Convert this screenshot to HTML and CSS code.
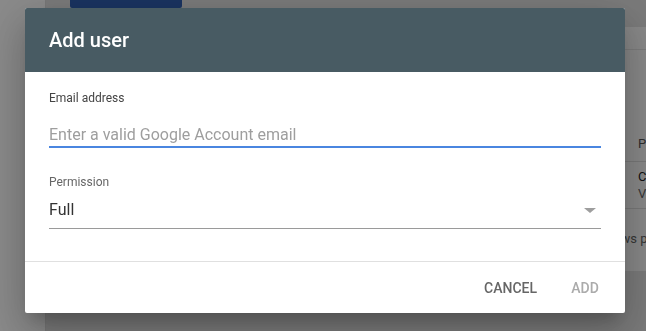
FILE: index.html
```html
<!DOCTYPE html>
<html lang="en">
<head>
    <meta charset="UTF-8">
    <meta name="viewport" content="width=device-width, initial-scale=1.0">
    <title>Add user</title>
    <link rel="stylesheet" href="styles.css">
</head>
<body>
    <div class="page">
        <aside class="sidebar"></aside>
        <main class="content">
            <div class="toolbar">
                <button class="primary-btn" aria-label="Add user"></button>
            </div>
            <div class="card">
                <div class="card-head"></div>
                <div class="card-filter"></div>
                <div class="table-row table-header">
                    <span class="col-name"></span>
                    <span class="col-perm">Permissions</span>
                </div>
                <div class="table-row">
                    <span class="col-name"></span>
                    <span class="col-perm">Collaborate<br><small>View</small></span>
                </div>
                <div class="table-footer">Rows per page: 10</div>
            </div>
        </main>
    </div>

    <div class="overlay">
        <div class="dialog">
            <div class="dialog-header">Add user</div>
            <div class="dialog-body">
                <label class="field-label" for="email">Email address</label>
                <input class="field-input" id="email" type="text" placeholder="Enter a valid Google Account email">

                <div class="field-label permission-label">Permission</div>
                <div class="select">
                    <span class="select-value">Full</span>
                    <span class="select-arrow"></span>
                </div>
            </div>
            <div class="dialog-footer">
                <button class="text-btn cancel-btn">Cancel</button>
                <button class="text-btn add-btn" disabled>Add</button>
            </div>
        </div>
    </div>
</body>
</html>
```

FILE: styles.css
```css
* {
    margin: 0;
    padding: 0;
    box-sizing: border-box;
}

body {
    font-family: Roboto, "Liberation Sans", Arial, sans-serif;
    background-color: #e2e2e2;
    width: 646px;
    height: 331px;
    overflow: hidden;
}

/* page behind the dialog */
.page {
    display: flex;
    height: 331px;
}

.sidebar {
    width: 46px;
    flex-shrink: 0;
    background-color: #ffffff;
    border-right: 1px solid #dcdcdc;
}

.content {
    flex: 1;
    padding-left: 24px;
    overflow: hidden;
}

.toolbar {
    margin-top: -28px;
    height: 36px;
}

.primary-btn {
    display: block;
    width: 112px;
    height: 36px;
    background-color: #2f5fb3;
    border: none;
    border-radius: 2px;
}

.card {
    margin-top: 19px;
    width: 700px;
    height: 244px;
    background-color: #fbfbfb;
}

.card-head {
    height: 23px;
    border-bottom: 1px solid #e4e4e4;
}

.card-filter {
    height: 76px;
}

.table-row {
    display: flex;
    align-items: center;
    height: 47px;
    border-bottom: 1px solid #dddddd;
    font-size: 13px;
    color: #222;
    line-height: 17px;
}

.table-header {
    height: 36px;
    color: #555;
}

.col-name {
    width: 568px;
    padding-left: 24px;
}

.col-perm small {
    font-size: 13px;
    color: #666;
}

.table-footer {
    padding: 22px 0 0 535px;
    font-size: 13px;
    color: #666;
}

/* dialog */
.overlay {
    position: fixed;
    top: 0;
    left: 0;
    width: 100%;
    height: 100%;
    background-color: rgba(0, 0, 0, 0.46);
    display: flex;
    align-items: flex-start;
    padding: 8px 0 0 25px;
}

.dialog {
    width: 600px;
    background-color: #fff;
    border-radius: 2px;
    box-shadow: 0 11px 15px -7px rgba(0, 0, 0, 0.2),
                0 24px 38px 3px rgba(0, 0, 0, 0.14),
                0 9px 46px 8px rgba(0, 0, 0, 0.12);
}

.dialog-header {
    height: 64px;
    padding: 20px 24px;
    background-color: #485b63;
    color: #fff;
    font-size: 20px;
    font-weight: 500;
    line-height: 24px;
    border-radius: 2px 2px 0 0;
}

.dialog-body {
    padding: 18px 24px 32px;
    border-bottom: 1px solid #e0e0e0;
}

.field-label {
    display: block;
    font-size: 12px;
    line-height: 16px;
    color: #444;
}

.field-input {
    display: block;
    width: 100%;
    height: 24px;
    margin-top: 18px;
    padding: 0 0 2px;
    border: none;
    border-bottom: 2px solid #4a86e0;
    font-family: inherit;
    font-size: 16px;
    line-height: 20px;
    color: #333;
    outline: none;
}

.field-input::placeholder {
    color: #9e9e9e;
}

.permission-label {
    margin-top: 26px;
    color: #666;
}

.select {
    display: flex;
    align-items: center;
    justify-content: space-between;
    margin-top: 10px;
    padding-bottom: 8px;
    border-bottom: 1px solid #9a9a9a;
}

.select-value {
    font-size: 16px;
    line-height: 20px;
    color: #333;
}

.select-arrow {
    margin-right: 5px;
    border-left: 6px solid transparent;
    border-right: 6px solid transparent;
    border-top: 5px solid #9e9e9e;
}

.dialog-footer {
    display: flex;
    justify-content: flex-end;
    gap: 8px;
    padding: 8px 8px 7px;
}

.text-btn {
    min-width: 64px;
    height: 36px;
    padding: 0 8px;
    background: none;
    border: none;
    font-family: inherit;
    font-size: 14px;
    font-weight: 500;
    line-height: 36px;
    text-transform: uppercase;
    cursor: pointer;
}

.cancel-btn {
    color: #666;
}

.add-btn {
    color: #ababab;
}
```
